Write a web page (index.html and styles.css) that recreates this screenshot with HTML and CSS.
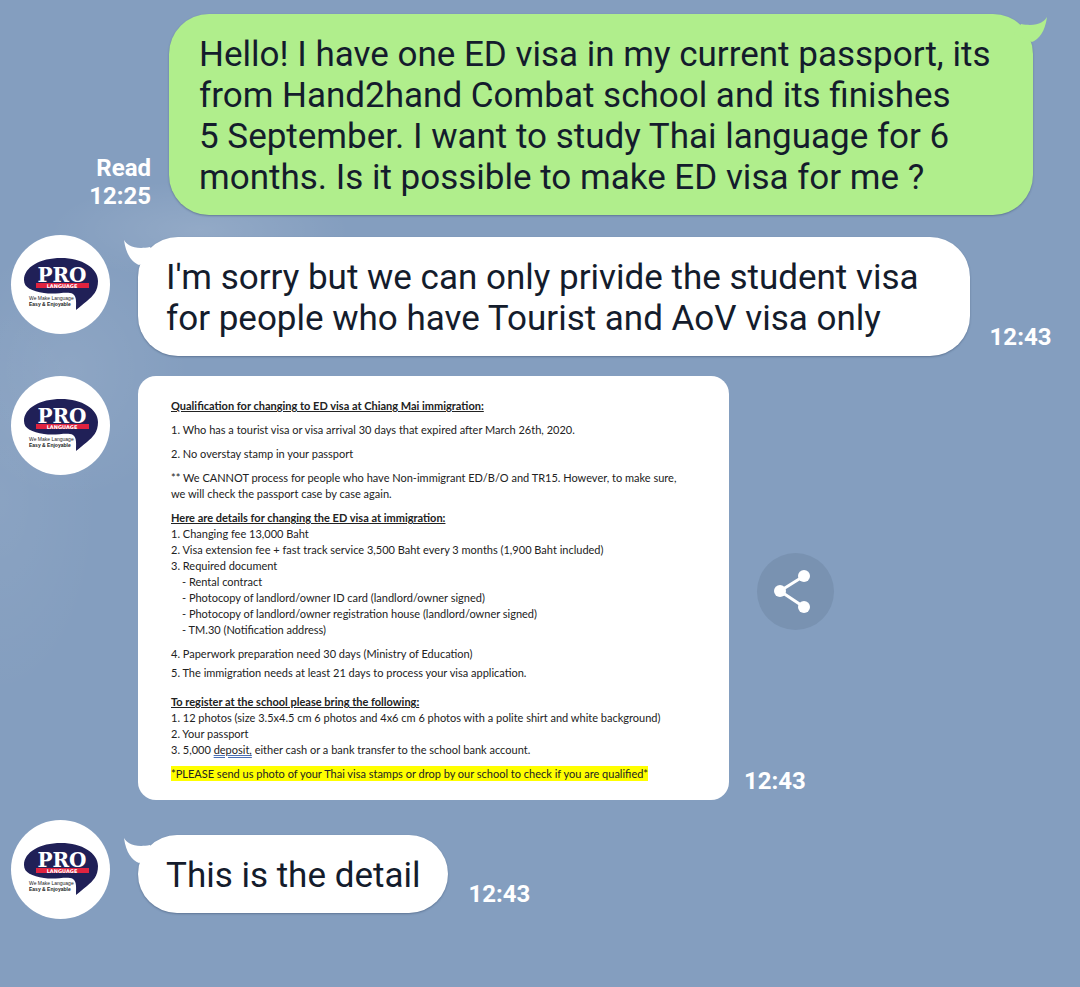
FILE: index.html
```html
<!DOCTYPE html>
<html lang="en">
<head>
    <meta charset="UTF-8">
    <meta name="viewport" content="width=device-width, initial-scale=1.0">
    <title>Chat</title>
    <link rel="stylesheet" href="styles.css">
</head>
<body>

    <!-- shared shapes -->
    <svg class="defs" aria-hidden="true">
        <symbol id="logo" viewBox="0 0 99 99">
            <path d="M13 45C13 32 29 23 50 23C71 23 87 33 87 46C87 56 82 61 76 66C72 69 69 72 65 75C65 68 66 62 62 59C56 56 45 60 33 58C21 56 13 53 13 45Z" fill="#202057"/>
            <rect x="25" y="48" width="53" height="5" fill="#e0233f"/>
            <text class="logo-pro" x="51" y="47">PRO</text>
            <text class="logo-strip" x="51" y="53">LANGUAGE</text>
            <text class="logo-line" x="18" y="65">We Make Language</text>
            <text class="logo-line bold" x="18" y="71">Easy &amp; Enjoyable</text>
        </symbol>
        <symbol id="tail" viewBox="0 0 34 27">
            <path d="M1 1C4 6 11 11 27 8L34 18L16 26C9 23 3 16 1 1Z" fill="currentColor"/>
        </symbol>
    </svg>

    <main class="chat">
        <div class="row mine">
            <div class="meta">Read<br>12:25</div>
            <div class="bubble">
                <svg class="tail" aria-hidden="true"><use href="#tail"/></svg>
                Hello! I have one ED visa in my current passport, its from Hand2hand Combat school and its finishes<br>5 September. I want to study Thai language for 6 months. Is it possible to make ED visa for me ?
            </div>
        </div>

        <div class="row">
            <svg class="avatar"><use href="#logo"/></svg>
            <div class="bubble">
                <svg class="tail" aria-hidden="true"><use href="#tail"/></svg>
                I'm sorry but we can only privide the student visa for people who have Tourist and AoV visa only
            </div>
            <div class="meta">12:43</div>
        </div>

        <div class="row">
            <svg class="avatar"><use href="#logo"/></svg>
            <div class="document">
                <h2>Qualification for changing to ED visa at Chiang Mai immigration:</h2>
                <p>1. Who has a tourist visa or visa arrival 30 days that expired after March 26th, 2020.</p>
                <p>2. No overstay stamp in your passport</p>
                <p>** We CANNOT process for people who have Non-immigrant ED/B/O and TR15. However, to make sure,<br>we will check the passport case by case again.</p>
                <h2>Here are details for changing the ED visa at immigration:</h2>
                <ul>
                    <li>1. Changing fee 13,000 Baht</li>
                    <li>2. Visa extension fee + fast track service 3,500 Baht every 3 months (1,900 Baht included)</li>
                    <li>3. Required document</li>
                    <li class="sub">- Rental contract</li>
                    <li class="sub">- Photocopy of landlord/owner ID card (landlord/owner signed)</li>
                    <li class="sub">- Photocopy of landlord/owner registration house (landlord/owner signed)</li>
                    <li class="sub">- TM.30 (Notification address)</li>
                </ul>
                <p>4. Paperwork preparation need 30 days (Ministry of Education)</p>
                <p class="close">5. The immigration needs at least 21 days to process your visa application.</p>
                <h2 class="apart">To register at the school please bring the following:</h2>
                <ul>
                    <li>1. 12 photos (size 3.5x4.5 cm 6 photos and 4x6 cm 6 photos with a polite shirt and white background)</li>
                    <li>2. Your passport</li>
                    <li>3. 5,000 <span class="spell">deposit,</span> either cash or a bank transfer to the school bank account.</li>
                </ul>
                <p><mark>*PLEASE send us photo of your Thai visa stamps or drop by our school to check if you are qualified*</mark></p>
            </div>
            <div class="side">
                <button class="share" type="button" aria-label="Share">
                    <svg viewBox="0 0 77 77" aria-hidden="true">
                        <path d="M47 23L23 38L47 54" fill="none" stroke="#fff" stroke-width="3"/>
                        <circle cx="47" cy="23" r="6" fill="#fff"/>
                        <circle cx="23" cy="38" r="6" fill="#fff"/>
                        <circle cx="47" cy="54" r="6" fill="#fff"/>
                    </svg>
                </button>
                <div class="meta">12:43</div>
            </div>
        </div>

        <div class="row short">
            <svg class="avatar"><use href="#logo"/></svg>
            <div class="bubble">
                <svg class="tail" aria-hidden="true"><use href="#tail"/></svg>
                This is the detail
            </div>
            <div class="meta">12:43</div>
        </div>
    </main>

</body>
</html>
```
FILE: styles.css
```css
body {
    margin: 0;
    min-height: 100vh;
    /* faint clouds on the left of the sky */
    background:
        radial-gradient(ellipse 150px 50px at 200px 230px, rgba(255, 255, 255, 0.12), transparent),
        radial-gradient(ellipse 120px 130px at 70px 370px, rgba(255, 255, 255, 0.08), transparent),
        radial-gradient(ellipse 100px 200px at 0 500px, rgba(255, 255, 255, 0.05), transparent),
        #849ebf;
    font-family: Roboto, sans-serif;
    color: #141c2c;
}

.defs {
    position: absolute;
    width: 0;
    height: 0;
}

.chat {
    display: flex;
    flex-direction: column;
    gap: 20px;
    padding: 14px 0;
}

.row {
    display: flex;
    align-items: flex-end;
    padding-left: 11px;
}

.mine {
    justify-content: flex-end;
    padding-right: 47px;
}

.avatar {
    flex: none;
    align-self: flex-start;
    width: 99px;
    height: 99px;
    margin-right: 28px;
    border-radius: 50%;
    background: #fff;
}

/* Messages */
.bubble {
    position: relative;
    box-sizing: border-box;
    max-width: 77vw;
    margin-top: 2px;
    padding: 20px 28px 17px;
    border-radius: 40px;
    background: #fff;
    box-shadow: 0 1px 2px rgba(40, 60, 90, 0.4);
    font-size: 35px;
    line-height: 41px;
}

.mine .bubble {
    max-width: 80vw;
    margin-top: 0;
    padding-left: 30px;
    background: #b0ee8c;
}

.tail {
    position: absolute;
    top: 2px;
    left: -15px;
    width: 34px;
    height: 27px;
    color: #fff;
}

.mine .tail {
    left: auto;
    right: -15px;
    color: #b0ee8c;
    transform: scaleX(-1);
}

.meta {
    margin: 0 20px 5px;
    color: #fff;
    font-size: 24px;
    font-weight: bold;
    line-height: 28px;
    text-align: right;
}

.mine .meta {
    margin-right: 18px;
}

/* one-line message, lower than the top of its avatar */
.short .bubble {
    margin-bottom: 6px;
}

.short .meta {
    margin-bottom: 11px;
}

/* Document photo */
.document {
    box-sizing: border-box;
    width: 591px;
    padding: 22px 20px 18px 33px;
    border-radius: 18px;
    background: #fff;
    color: #222;
    font-family: Lato, sans-serif;
    font-size: 11px;
    line-height: 16px;
    white-space: nowrap;
}

.document h2,
.document p,
.document ul {
    margin: 0;
    padding: 0;
    font-size: 11px;
    list-style: none;
}

.document h2 {
    text-decoration: underline;
}

.document p,
.document p + h2 {
    margin-top: 8px;
}

.document .close {
    margin-top: 3px;
}

.document p + .apart {
    margin-top: 13px;
}

.sub {
    padding-left: 11px;
}

.spell {
    text-decoration: underline double #4a6fb5;
}

mark {
    padding: 1px 0;
    background: #ff0;
    color: #222;
}

/* Share button and time next to the document */
.side {
    display: grid;
    align-self: stretch;
}

.side > * {
    grid-area: 1 / 1;
}

.side .meta {
    align-self: end;
    justify-self: start;
    margin-left: 15px;
}

.share {
    align-self: center;
    width: 77px;
    height: 77px;
    margin: 6px 0 0 28px;
    padding: 0;
    border: none;
    border-radius: 50%;
    background: #7992b1;
    cursor: pointer;
}

.share svg {
    display: block;
}

/* Logo lettering */
.logo-pro {
    fill: #fff;
    font: bold 20px "DejaVu Serif", serif;
    text-anchor: middle;
}

.logo-strip {
    fill: #fff;
    font: bold 5px "DejaVu Sans", sans-serif;
    text-anchor: middle;
}

.logo-line {
    fill: #222;
    font: 5px "Liberation Sans", sans-serif;
}

.logo-line.bold {
    font-weight: bold;
}
```
